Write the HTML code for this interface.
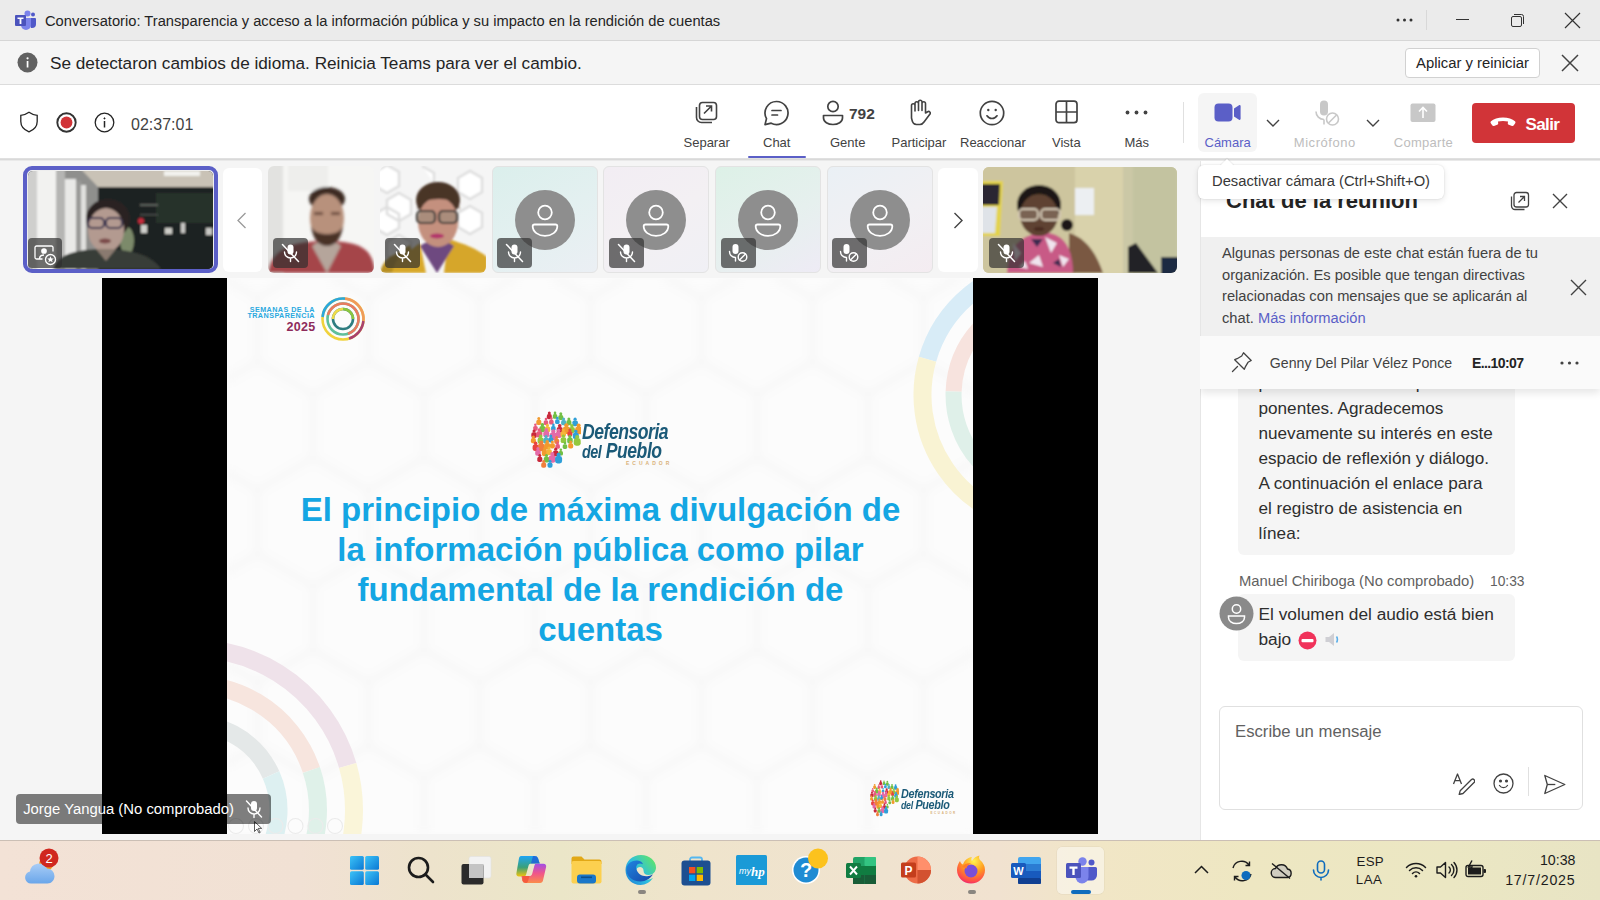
<!DOCTYPE html>
<html><head><meta charset="utf-8">
<style>
*{margin:0;padding:0;box-sizing:border-box}
html,body{width:1600px;height:900px;overflow:hidden;background:#f0f0f0;font-family:"Liberation Sans",sans-serif;color:#242424}
.a{position:absolute}
svg{display:block}
#title{left:0;top:0;width:1600px;height:41px;background:#ebebeb;border-bottom:1px solid #d6d6d6}
#notif{left:0;top:41px;width:1600px;height:44px;background:#f5f5f5;border-bottom:1px solid #dcdcdc}
#tool{left:0;top:85px;width:1600px;height:74px;background:#fff;border-bottom:1px solid #e0e0e0}
#stage{left:0;top:159px;width:1200px;height:681px;background:#f5f5f5}
#panel{left:1200px;top:159px;width:400px;height:681px;background:#fff;box-shadow:inset 1px 0 0 #e6e6e6;overflow:hidden}
#taskbar{left:0;top:840px;width:1600px;height:60px;background:linear-gradient(90deg,#f3e2d6 0px,#f1e1d4 300px,#ede3cc 430px,#ebe6c8 560px,#efe4cc 700px,#f0e3cf 880px,#f1e2d0 1000px,#f1e6c6 1100px,#eee7c2 1250px,#ebe7c3 1450px,#e8e4c4 1600px);box-shadow:inset 0 1px 0 #cbbfb5}
.t{position:absolute;line-height:1;white-space:nowrap}
.badge{width:35px;height:30px;background:rgba(45,45,45,0.68);border-radius:4px}
.vid{overflow:hidden;border-radius:6px}
.tileav{width:106px;height:107px;border-radius:6px;border:1px solid #e3e3e3;overflow:hidden}
.lbl{font-size:13px;color:#424242}
</style></head><body>
<div id="title" class="a">
 <svg class="a" style="left:14px;top:10px" width="22" height="20" viewBox="0 0 22 20">
  <circle cx="13.5" cy="3.5" r="3" fill="#7b83eb"/><circle cx="19" cy="4.5" r="2" fill="#5059c9"/>
  <path d="M14 8h7a1 1 0 0 1 1 1v5a4 4 0 0 1-4 4h-1z" fill="#5059c9"/>
  <path d="M8 8h9v7a5 5 0 0 1-10 0z" fill="#7b83eb"/>
  <rect x="1" y="5" width="11" height="11" rx="1" fill="#4b53bc"/>
  <path d="M3.5 7.5h6v1.6H7.4V14H5.6V9.1H3.5z" fill="#fff"/>
 </svg>
 <div class="t" style="left:45px;top:13.5px;font-size:14.7px;color:#242424">Conversatorio: Transparencia y acceso a la información pública y su impacto en la rendición de cuentas</div>
 <svg class="a" style="left:1396px;top:18px" width="20" height="4"><circle cx="2" cy="2" r="1.5" fill="#333"/><circle cx="8.5" cy="2" r="1.5" fill="#333"/><circle cx="15" cy="2" r="1.5" fill="#333"/></svg>
 <div class="a" style="left:1426px;top:10px;width:1px;height:20px;background:#d8d8d8"></div>
 <div class="a" style="left:1456px;top:19px;width:13px;height:1px;background:#333"></div>
 <svg class="a" style="left:1510px;top:13px" width="15" height="15" viewBox="0 0 15 15" fill="none" stroke="#333" stroke-width="1"><rect x="1.5" y="3.5" width="10" height="10" rx="1.5"/><path d="M4 1.5h7.5a2 2 0 0 1 2 2V11"/></svg>
 <svg class="a" style="left:1564px;top:12px" width="17" height="17" viewBox="0 0 17 17" stroke="#333" stroke-width="1.2"><path d="M1 1L16 16M16 1L1 16"/></svg>
</div>
<div id="notif" class="a">
 <svg class="a" style="left:17px;top:11px" width="21" height="21" viewBox="0 0 21 21"><circle cx="10.5" cy="10.5" r="10" fill="#616161"/><rect x="9.7" y="9" width="1.7" height="6.5" fill="#fff"/><circle cx="10.55" cy="6.3" r="1.1" fill="#fff"/></svg>
 <div class="t" style="left:50px;top:14px;font-size:17.2px;color:#242424">Se detectaron cambios de idioma. Reinicia Teams para ver el cambio.</div>
 <div class="a" style="left:1405px;top:7px;width:135px;height:30px;background:#fff;border:1px solid #d1d1d1;border-radius:4px"></div>
 <div class="t" style="left:1416px;top:14.5px;font-size:14.85px;color:#242424">Aplicar y reiniciar</div>
 <svg class="a" style="left:1561px;top:13px" width="18" height="18" viewBox="0 0 18 18" stroke="#424242" stroke-width="1.5"><path d="M1 1L17 17M17 1L1 17"/></svg>
</div>
<div id="tool" class="a">
 <svg class="a" style="left:19px;top:26px" width="20" height="22" viewBox="0 0 20 22" fill="none" stroke="#242424" stroke-width="1.3"><path d="M10 1.2C7.5 3 4.8 4 1.8 4.3v6.2c0 4.8 3 8.3 8.2 10.3c5.2-2 8.2-5.5 8.2-10.3V4.3C15.2 4 12.5 3 10 1.2z"/></svg>
 <svg class="a" style="left:56px;top:26.5px" width="21" height="21" viewBox="0 0 21 21"><circle cx="10.5" cy="10.5" r="9.2" fill="none" stroke="#333" stroke-width="1.9"/><circle cx="10.5" cy="10.5" r="5.9" fill="#d13438"/></svg>
 <svg class="a" style="left:93.5px;top:26.5px" width="21" height="21" viewBox="0 0 21 21" fill="none" stroke="#242424" stroke-width="1.3"><circle cx="10.5" cy="10.5" r="9.3"/><path d="M10.5 9v6.5" stroke-width="1.5"/><circle cx="10.5" cy="6.4" r="0.6" fill="#242424" stroke-width="0.9"/></svg>
 <div class="t" style="left:131px;top:31.5px;font-size:16px;color:#424242">02:37:01</div>

 <svg class="a" style="left:694px;top:15px" width="25" height="25" viewBox="0 0 25 25" fill="none" stroke="#424242" stroke-width="1.6"><rect x="5.5" y="2.5" width="17" height="17" rx="3"/><path d="M2.5 7v10.5a5 5 0 0 0 5 5H18"/><path d="M10 13.5l7.5-7.5M12 6h5.5v5.5"/></svg>
 <div class="t lbl" style="left:683.5px;top:50.5px">Separar</div>
 <svg class="a" style="left:763px;top:14.5px" width="27" height="26" viewBox="0 0 27 26" fill="none" stroke="#424242" stroke-width="1.7"><path d="M13.5 1.5a11.5 11.5 0 1 1-5.3 21.7L2 24.6l1.5-6A11.5 11.5 0 0 1 13.5 1.5z" stroke-linejoin="round"/><path d="M9 10.5h9M9 15h5.5" stroke-linecap="round"/></svg>
 <div class="t lbl" style="left:763px;top:50.5px">Chat</div>
 <div class="a" style="left:748px;top:70.5px;width:58px;height:2.5px;background:#5b5fc7;border-radius:1px"></div>
 <svg class="a" style="left:821px;top:14.5px" width="24" height="26" viewBox="0 0 24 26" fill="none" stroke="#424242" stroke-width="1.7"><circle cx="12" cy="6.5" r="5.2"/><path d="M2.5 15.5h19v2.5c0 4-4.5 6.5-9.5 6.5s-9.5-2.5-9.5-6.5z" stroke-linejoin="round"/></svg>
 <div class="t" style="left:849px;top:21px;font-size:15.5px;font-weight:700;color:#424242">792</div>
 <div class="t lbl" style="left:830px;top:50.5px">Gente</div>
 <svg class="a" style="left:909px;top:14px" width="22" height="27" viewBox="-1 -1 22 27" fill="none" stroke="#424242" stroke-width="1.6" stroke-linejoin="round" stroke-linecap="round"><path d="M1.5 18V5.5a1.75 1.75 0 0 1 3.5 0V11M5 11V3.5a1.75 1.75 0 0 1 3.5 0V10.5M8.5 10.5V2a1.75 1.75 0 0 1 3.5 0V10.5M12 10.5V3.5a1.75 1.75 0 0 1 3.5 0V13l2.2-1.3a1.7 1.7 0 0 1 2.3 2.4L14 22c-1 1.5-2 2.5-4 2.5H6.5c-2.5 0-4-2-4.5-4.5L1.5 18"/></svg>
 <div class="t lbl" style="left:891.5px;top:50.5px">Participar</div>
 <svg class="a" style="left:979px;top:14.5px" width="26" height="26" viewBox="0 0 26 26" fill="none" stroke="#424242" stroke-width="1.7"><circle cx="13" cy="13" r="11.7"/><path d="M8 15.8c1.2 1.8 3 2.7 5 2.7s3.8-.9 5-2.7" stroke-linecap="round"/><circle cx="9.3" cy="10" r="1.2" fill="#424242" stroke="none"/><circle cx="16.7" cy="10" r="1.2" fill="#424242" stroke="none"/></svg>
 <div class="t lbl" style="left:960px;top:50.5px">Reaccionar</div>
 <svg class="a" style="left:1055px;top:15px" width="23" height="24" viewBox="0 0 23 24" fill="none" stroke="#424242" stroke-width="1.7"><rect x="1" y="1.2" width="21" height="21.5" rx="3"/><path d="M11.5 1.2v21.5M1 12h21"/></svg>
 <div class="t lbl" style="left:1052px;top:50.5px">Vista</div>
 <svg class="a" style="left:1125px;top:24.5px" width="23" height="5" viewBox="0 0 23 5" fill="#424242"><circle cx="2.5" cy="2.5" r="1.9"/><circle cx="11.5" cy="2.5" r="1.9"/><circle cx="20.5" cy="2.5" r="1.9"/></svg>
 <div class="t lbl" style="left:1124.5px;top:50.5px">Más</div>
 <div class="a" style="left:1182.5px;top:17px;width:1px;height:41px;background:#e0e0e0"></div>

 <div class="a" style="left:1198px;top:7.5px;width:59px;height:59px;background:#f5f5f5;border-radius:6px"></div>
 <svg class="a" style="left:1214px;top:17.5px" width="27" height="19" viewBox="0 0 27 19"><rect x="0.5" y="0.5" width="18" height="18" rx="4" fill="#5b5fc7"/><path d="M20 5.5l5-3.2c.8-.5 1.6 0 1.6.9v12.6c0 .9-.8 1.4-1.6.9l-5-3.2z" fill="#5b5fc7"/></svg>
 <div class="t lbl" style="left:1204.5px;top:50.5px;color:#5b5fc7">Cámara</div>
 <svg class="a" style="left:1265.5px;top:33.5px" width="14" height="8" viewBox="0 0 14 8" fill="none" stroke="#424242" stroke-width="1.4"><path d="M1 1l6 6 6-6"/></svg>
 <svg class="a" style="left:1314px;top:14.5px" width="26" height="27" viewBox="0 0 26 27"><rect x="6" y="0.5" width="8" height="15" rx="4" fill="#c8c8c8"/><path d="M2 11.5c0 4.5 3.5 8 8 8" fill="none" stroke="#c8c8c8" stroke-width="1.6"/><path d="M10 19.5v5" stroke="#c8c8c8" stroke-width="1.6"/><circle cx="18.5" cy="19" r="6" fill="#fff" stroke="#c8c8c8" stroke-width="1.6"/><path d="M14.5 23l8-8" stroke="#c8c8c8" stroke-width="1.6"/></svg>
 <div class="t lbl" style="left:1293.8px;top:50.5px;color:#bdbdbd;letter-spacing:0.55px">Micrófono</div>
 <svg class="a" style="left:1365.5px;top:33.5px" width="14" height="8" viewBox="0 0 14 8" fill="none" stroke="#424242" stroke-width="1.4"><path d="M1 1l6 6 6-6"/></svg>
 <svg class="a" style="left:1410px;top:17.5px" width="26" height="19" viewBox="0 0 26 19"><rect x="0.5" y="0.5" width="25" height="18.5" rx="2" fill="#c8c8c8"/><path d="M13 15V5M9 8.5l4-4 4 4" fill="none" stroke="#fff" stroke-width="1.6"/></svg>
 <div class="t lbl" style="left:1393.8px;top:50.5px;color:#bdbdbd;letter-spacing:0.27px">Comparte</div>

 <div class="a" style="left:1472px;top:17.5px;width:103px;height:40px;background:#d13438;border-radius:4px"></div>
 <svg class="a" style="left:1490px;top:32px" width="26" height="11" viewBox="0 0 26 11"><path d="M13 0.5c5 0 9.5 1.5 12 3.8c.6.6.6 1.4.2 2l-1.4 2c-.4.6-1.1.8-1.8.6l-3.2-1.1c-.7-.2-1.1-.9-1-1.6l.2-1.6C16.6 4.2 14.8 4 13 4s-3.6.2-5 .6l.2 1.6c.1.7-.3 1.4-1 1.6L4 8.9c-.7.2-1.4 0-1.8-.6L.8 6.3c-.4-.6-.4-1.4.2-2C3.5 2 8 .5 13 .5z" fill="#fff"/></svg>
 <div class="t" style="left:1525.5px;top:30.5px;font-size:17px;font-weight:700;color:#fff;letter-spacing:-0.6px">Salir</div>
</div>
<div id="stage" class="a">
 <!-- filmstrip -->
 <div class="a" style="left:22.5px;top:7px;width:195px;height:107px;border:4px solid #5b5fc7;border-radius:9px;background:#eeeeee"></div>
 <div class="a vid" style="left:27.8px;top:11.8px;width:185px;height:98px;border-radius:5px">
  <svg width="185" height="98" viewBox="0 0 185 98">
   <defs><filter id="b1" x="-10%" y="-10%" width="120%" height="120%"><feGaussianBlur stdDeviation="1.3"/></filter></defs>
   <rect width="185" height="98" fill="#22272a"/>
   <g filter="url(#b1)">
   <rect x="-5" y="-5" width="75" height="110" fill="#8f8f8d"/>
   <rect x="-5" y="-5" width="14" height="110" fill="#cfcfcd"/>
   <rect x="9" y="-5" width="19" height="110" fill="#f2f2f0"/>
   <rect x="28" y="-5" width="9" height="110" fill="#b5b5b3"/>
   <rect x="37" y="8" width="11" height="100" fill="#e9e9e7"/>
   <rect x="48" y="10" width="5" height="100" fill="#9a9a98"/>
   <rect x="53" y="14" width="5" height="90" fill="#e0e0de"/>
   <path d="M50 -5h140v21H70z" fill="#c9c2b6"/>
   <rect x="136" y="0" width="36" height="5" fill="#f2f2ee"/>
   <rect x="70" y="16" width="120" height="90" fill="#1e2422"/>
   <rect x="128" y="22" width="60" height="30" fill="#26302c"/>
   <rect x="112" y="33" width="18" height="2" fill="#5a5e5a"/>
   <rect x="112" y="43" width="18" height="1.5" fill="#4a4e4a"/>
   <ellipse cx="99" cy="70" rx="7" ry="14" fill="#7c8a6a"/>
   <circle cx="113" cy="50" r="3" fill="#c42a3a"/>
   <rect x="113" y="54" width="6" height="8" fill="#cfd0cc"/><rect x="137" y="57" width="7" height="6" fill="#cdcdc8"/><rect x="153" y="52" width="4" height="10" fill="#c8c8c4"/><rect x="178" y="57" width="6" height="7" fill="#c8c8c4"/>
   <path d="M25 98c3-12 18-20 50-20s50 8 58 20z" fill="#383c38"/>
   <ellipse cx="80" cy="48" rx="22" ry="20" fill="#2a2220"/>
   <ellipse cx="78" cy="59" rx="18" ry="22" fill="#b39a90"/>
   <rect x="60" y="47" width="16" height="10" rx="4" fill="none" stroke="#3b3550" stroke-width="2"/><rect x="78" y="47" width="16" height="10" rx="4" fill="none" stroke="#3b3550" stroke-width="2"/>
   <ellipse cx="77" cy="70" rx="6" ry="2.5" fill="#7a4a48"/>
   <path d="M68 78l10 12 10-12z" fill="#8a7a70"/>
   </g>
  </svg>
 </div>
 <div class="a badge" style="left:28px;top:79px;width:34px;height:30px"><svg width="34" height="30" viewBox="0 0 34 30" fill="none" stroke="#fff" stroke-width="1.3"><path d="M14.5 21H8.5a1.5 1.5 0 0 1-1.5-1.5V9.5A1.5 1.5 0 0 1 8.5 8h15A1.5 1.5 0 0 1 25 9.5v4"/><circle cx="16" cy="13" r="2.2" fill="#fff"/><path d="M11.5 21c0-2.5 2-4 4.5-4" /><circle cx="22.5" cy="21.5" r="5" fill="#6b6b6b"/><path d="M22.5 18.3l1 2.1 2.2.2-1.7 1.4.6 2.2-2.1-1.2-2.1 1.2.6-2.2-1.7-1.4 2.2-.2z" fill="#fff" stroke="none"/></svg></div>
 <div class="a" style="left:223px;top:9px;width:39px;height:104px;background:#fff;border-radius:6px"></div>
 <svg class="a" style="left:236px;top:53px" width="11" height="17" viewBox="0 0 11 17" fill="none" stroke="#9a9a9a" stroke-width="1.3"><path d="M9.5 1L2 8.5 9.5 16"/></svg>

 <div class="a vid" style="left:267.5px;top:7px;width:106.5px;height:107px">
  <svg width="107" height="107" viewBox="0 0 107 107">
   <defs><filter id="b2" x="-10%" y="-10%" width="120%" height="120%"><feGaussianBlur stdDeviation="1.5"/></filter></defs>
   <rect width="107" height="107" fill="#f6f6f4"/>
   <g filter="url(#b2)">
   <rect x="-5" y="-5" width="20" height="115" fill="#e2e2e0"/>
   <rect x="20" y="-5" width="40" height="30" fill="#eeeeec"/>
   <path d="M0 107c2-22 20-32 58-32s47 10 49 32z" fill="#a5444a"/>
   <path d="M44 80l15 27 14-27c-5-4-9-6-14-6s-10 2-15 6z" fill="#b5a59b"/>
   <ellipse cx="59" cy="33" rx="18" ry="12" fill="#3c2b24"/>
   <ellipse cx="59" cy="52" rx="17" ry="24" fill="#b8917c"/>
   <path d="M43 60c2 14 8 20 16 20s14-6 16-20c-3 6-8 8-16 8s-13-2-16-8z" fill="#4a3128"/>
   <rect x="46" y="46" width="9" height="3" fill="#6a4a3a"/><rect x="63" y="46" width="9" height="3" fill="#6a4a3a"/>
   </g>
  </svg>
 </div>
 <div class="a badge" style="left:273px;top:79px"><svg width="35" height="30" viewBox="0 0 35 30" fill="none" stroke="#fff" stroke-width="1.4" stroke-linecap="round"><rect x="14.5" y="6.5" width="6" height="10" rx="3" fill="#fff" stroke="none"/><path d="M11.5 14c0 3.5 2.7 6 6 6s6-2.5 6-6M17.5 20v3.5"/><path d="M9.5 6.5l16 17" stroke-width="1.5"/></svg></div>
 <div class="a vid" style="left:379.5px;top:7px;width:106.5px;height:107px">
  <svg width="107" height="107" viewBox="0 0 107 107">
   <defs><filter id="b3" x="-10%" y="-10%" width="120%" height="120%"><feGaussianBlur stdDeviation="1.2"/></filter></defs>
   <rect width="107" height="107" fill="#f5f5f5"/>
   <g filter="url(#b3)" fill="#ffffff" stroke="#dedede" stroke-width="2.5">
   <path d="M-5 6l12-7 12 7v14l-12 7-12-7zM19 27l12 7v14l-12 7-12-7V34zM-5 48l12-7 12 7v14l-12 7-12-7zM19 69l12 7v14l-12 7-12-7V76zM78 12l12-7 12 7v14l-12 7-12-7zM90 40l12 7v14l-12 7-12-7V47zM42 0l12 7v10"/>
   </g>
   <g filter="url(#b3)">
   <path d="M0 107c2-10 8-16 14-18l16-10 6 28z" fill="#b89020"/>
   <path d="M68 73c14 4 30 10 39 18v16H64z" fill="#d6a62a"/>
   <path d="M12 107c3-14 10-20 20-24l8-6 6 30z" fill="#d8a82c"/>
   <path d="M40 80l17 27 17-27c-5-4-11-6-17-6s-12 2-17 6z" fill="#6e4a80"/>
   <ellipse cx="58" cy="34" rx="22" ry="18" fill="#4a3428"/>
   <ellipse cx="58" cy="56" rx="20" ry="25" fill="#c4907e"/>
   <path d="M37 44c2-12 10-20 21-20s20 8 22 20c-4-8-10-11-21-11s-17 3-22 11z" fill="#4a3428"/>
   <rect x="37" y="45" width="18" height="12" rx="4" fill="#7a8a78" fill-opacity="0.35" stroke="#403c3a" stroke-width="2.2"/><rect x="59" y="45" width="18" height="12" rx="4" fill="#7a8a78" fill-opacity="0.35" stroke="#403c3a" stroke-width="2.2"/>
   <ellipse cx="57" cy="70" rx="7" ry="2.5" fill="#b3366a"/>
   </g>
  </svg>
 </div>
 <div class="a badge" style="left:385px;top:79px"><svg width="35" height="30" viewBox="0 0 35 30" fill="none" stroke="#fff" stroke-width="1.4" stroke-linecap="round"><rect x="14.5" y="6.5" width="6" height="10" rx="3" fill="#fff" stroke="none"/><path d="M11.5 14c0 3.5 2.7 6 6 6s6-2.5 6-6M17.5 20v3.5"/><path d="M9.5 6.5l16 17" stroke-width="1.5"/></svg></div>
 <div class="a tileav" style="left:491.5px;top:7px;background:linear-gradient(150deg,#dbefec,#e3f0f0 50%,#ebeff4)"><svg class="a" style="left:22px;top:23px" width="60" height="60" viewBox="0 0 60 60"><circle cx="30" cy="30" r="30" fill="#8e8e8e"/><circle cx="30" cy="22.5" r="6.8" fill="none" stroke="#fff" stroke-width="1.8"/><path d="M19.5 34.5h21a1.8 1.8 0 0 1 1.8 1.8c0 5.5-5.5 9.5-12.3 9.5s-12.3-4-12.3-9.5a1.8 1.8 0 0 1 1.8-1.8z" fill="none" stroke="#fff" stroke-width="1.8" stroke-linejoin="round"/></svg></div>
 <div class="a badge" style="left:497px;top:79px"><svg width="35" height="30" viewBox="0 0 35 30" fill="none" stroke="#fff" stroke-width="1.4" stroke-linecap="round"><rect x="14.5" y="6.5" width="6" height="10" rx="3" fill="#fff" stroke="none"/><path d="M11.5 14c0 3.5 2.7 6 6 6s6-2.5 6-6M17.5 20v3.5"/><path d="M9.5 6.5l16 17" stroke-width="1.5"/></svg></div>
 <div class="a tileav" style="left:603px;top:7px;background:linear-gradient(150deg,#f2edf3,#f3f0f3 50%,#f0f0f5)"><svg class="a" style="left:22px;top:23px" width="60" height="60" viewBox="0 0 60 60"><circle cx="30" cy="30" r="30" fill="#8e8e8e"/><circle cx="30" cy="22.5" r="6.8" fill="none" stroke="#fff" stroke-width="1.8"/><path d="M19.5 34.5h21a1.8 1.8 0 0 1 1.8 1.8c0 5.5-5.5 9.5-12.3 9.5s-12.3-4-12.3-9.5a1.8 1.8 0 0 1 1.8-1.8z" fill="none" stroke="#fff" stroke-width="1.8" stroke-linejoin="round"/></svg></div>
 <div class="a badge" style="left:608.5px;top:79px"><svg width="35" height="30" viewBox="0 0 35 30" fill="none" stroke="#fff" stroke-width="1.4" stroke-linecap="round"><rect x="14.5" y="6.5" width="6" height="10" rx="3" fill="#fff" stroke="none"/><path d="M11.5 14c0 3.5 2.7 6 6 6s6-2.5 6-6M17.5 20v3.5"/><path d="M9.5 6.5l16 17" stroke-width="1.5"/></svg></div>
 <div class="a tileav" style="left:715px;top:7px;background:linear-gradient(150deg,#ddf1e7,#e6f0ee 55%,#eeebf5)"><svg class="a" style="left:22px;top:23px" width="60" height="60" viewBox="0 0 60 60"><circle cx="30" cy="30" r="30" fill="#8e8e8e"/><circle cx="30" cy="22.5" r="6.8" fill="none" stroke="#fff" stroke-width="1.8"/><path d="M19.5 34.5h21a1.8 1.8 0 0 1 1.8 1.8c0 5.5-5.5 9.5-12.3 9.5s-12.3-4-12.3-9.5a1.8 1.8 0 0 1 1.8-1.8z" fill="none" stroke="#fff" stroke-width="1.8" stroke-linejoin="round"/></svg></div>
 <div class="a badge" style="left:720.5px;top:79px"><svg width="35" height="30" viewBox="0 0 35 30" fill="none" stroke="#fff" stroke-width="1.4" stroke-linecap="round"><rect x="11.5" y="6" width="6" height="10" rx="3" fill="#fff" stroke="none"/><path d="M8.5 13.5c0 3.5 2.7 6 6 6M14.5 19.5v3.5"/><circle cx="21.5" cy="19" r="4.3"/><path d="M18.5 22l6-6"/></svg></div>
 <div class="a tileav" style="left:826.5px;top:7px;background:linear-gradient(150deg,#eaf0f5,#f1f0f3 55%,#f4ecf1)"><svg class="a" style="left:22px;top:23px" width="60" height="60" viewBox="0 0 60 60"><circle cx="30" cy="30" r="30" fill="#8e8e8e"/><circle cx="30" cy="22.5" r="6.8" fill="none" stroke="#fff" stroke-width="1.8"/><path d="M19.5 34.5h21a1.8 1.8 0 0 1 1.8 1.8c0 5.5-5.5 9.5-12.3 9.5s-12.3-4-12.3-9.5a1.8 1.8 0 0 1 1.8-1.8z" fill="none" stroke="#fff" stroke-width="1.8" stroke-linejoin="round"/></svg></div>
 <div class="a badge" style="left:832px;top:79px"><svg width="35" height="30" viewBox="0 0 35 30" fill="none" stroke="#fff" stroke-width="1.4" stroke-linecap="round"><rect x="11.5" y="6" width="6" height="10" rx="3" fill="#fff" stroke="none"/><path d="M8.5 13.5c0 3.5 2.7 6 6 6M14.5 19.5v3.5"/><circle cx="21.5" cy="19" r="4.3"/><path d="M18.5 22l6-6"/></svg></div>
 <div class="a" style="left:938px;top:9px;width:40px;height:104px;background:#fff;border-radius:6px"></div>
 <svg class="a" style="left:953px;top:53px" width="11" height="17" viewBox="0 0 11 17" fill="none" stroke="#424242" stroke-width="1.4"><path d="M1.5 1L9 8.5 1.5 16"/></svg>
 <div class="a vid" style="left:983.3px;top:7.5px;width:194px;height:106px">
  <svg width="194" height="106" viewBox="0 0 194 106">
   <defs><filter id="b4" x="-10%" y="-10%" width="120%" height="120%"><feGaussianBlur stdDeviation="1.3"/></filter></defs>
   <rect width="194" height="106" fill="#d5cea6"/>
   <g filter="url(#b4)">
   <rect x="-5" y="-5" width="97" height="115" fill="#cdc59e"/>
   <rect x="92" y="-5" width="48" height="115" fill="#d9d2ab"/>
   <rect x="140" y="-5" width="60" height="115" fill="#cbc8a6"/><rect x="150" y="-5" width="44" height="115" fill="#c3c3a0"/>
   <path d="M-5 14h25l-3 55H-5z" fill="#e3d34c"/>
   <path d="M-5 17h22l-1 21H-5z" fill="#2a2830"/>
   <path d="M-5 40h19l-2 26H-5z" fill="#dfe3e8"/>
   <rect x="92" y="21" width="19" height="27" fill="#eceff2"/>
   <path d="M145 80l8-4 22 30h-30z" fill="#232326"/>
   <rect x="178" y="90" width="20" height="18" fill="#1e2a42"/>
   <path d="M86 66c14 4 26 16 34 40H86z" fill="#7a5842"/>
   <path d="M24 106c1-22 10-38 34-40s32 18 32 40z" fill="#c85a86"/>
   <path d="M30 76l8 10-6 8zM62 70l12 6-6 10zM46 96l10-8 4 12zM76 88l10 4-6 8zM36 100l6-6 3 8z" fill="#f0e4ee"/>
   <path d="M48 72l6 8 6-8zM70 96l6-4 2 8z" fill="#3a2a50"/>
   <ellipse cx="56" cy="38" rx="22" ry="20" fill="#1c1816"/>
   <circle cx="84" cy="58" r="6" fill="#1c1816"/>
   <ellipse cx="56" cy="48" rx="19" ry="21" fill="#5e4232"/>
   <rect x="36" y="42" width="19" height="11" rx="4" fill="#b0a290" fill-opacity="0.35" stroke="#d2c6b2" stroke-width="2"/><rect x="58" y="42" width="19" height="11" rx="4" fill="#b0a290" fill-opacity="0.35" stroke="#d2c6b2" stroke-width="2"/>
   <ellipse cx="56" cy="62" rx="5" ry="2" fill="#4a2a22"/>
   </g>
  </svg>
 </div>
 <div class="a badge" style="left:988.5px;top:79px"><svg width="35" height="30" viewBox="0 0 35 30" fill="none" stroke="#fff" stroke-width="1.4" stroke-linecap="round"><rect x="14.5" y="6.5" width="6" height="10" rx="3" fill="#fff" stroke="none"/><path d="M11.5 14c0 3.5 2.7 6 6 6s6-2.5 6-6M17.5 20v3.5"/><path d="M9.5 6.5l16 17" stroke-width="1.5"/></svg></div>

 <!-- video frame -->
 <div class="a" style="left:102px;top:119px;width:124.5px;height:555.5px;background:#000"></div>
 <div class="a" style="left:973px;top:119px;width:125px;height:555.5px;background:#000"></div>
 <div class="a" id="slide" style="left:226.5px;top:119px;width:746.5px;height:555.5px;background:#fbfbfb;overflow:hidden">
  <svg class="a" style="left:0;top:0" width="747" height="556" viewBox="0 0 747 556">
   <defs><pattern id="hx" patternUnits="userSpaceOnUse" x="30.5" y="148" width="111" height="192"><path d="M0.0 -64.0 L55.4 -32.0 L55.4 32.0 L0.0 64.0 L-55.4 32.0 L-55.4 -32.0ZM111.0 -64.0 L166.4 -32.0 L166.4 32.0 L111.0 64.0 L55.6 32.0 L55.6 -32.0ZM55.5 32.0 L110.9 64.0 L110.9 128.0 L55.5 160.0 L0.1 128.0 L0.1 64.0ZM0.0 128.0 L55.4 160.0 L55.4 224.0 L0.0 256.0 L-55.4 224.0 L-55.4 160.0ZM111.0 128.0 L166.4 160.0 L166.4 224.0 L111.0 256.0 L55.6 224.0 L55.6 160.0Z" fill="#fcfcfc" stroke="#f7f7f7" stroke-width="7"/></pattern><filter id="hb"><feGaussianBlur stdDeviation="4"/></filter></defs>
   <rect width="747" height="556" fill="url(#hx)" filter="url(#hb)"/>
  </svg>
  <svg class="a" style="left:0;top:0" width="747" height="556" viewBox="0 0 747 556" fill="none">
   <g><path d="M-62.5 373.0A161.5 161.5 0 0 1 120.7 487.5" stroke="#efe2ea" stroke-width="18"/><path d="M120.7 487.5A161.5 161.5 0 0 1 105.4 612.8" stroke="#faf5d9" stroke-width="18"/><path d="M-56.3 408.4A125.5 125.5 0 0 1 84.4 492.0" stroke="#f7e5de" stroke-width="18"/><path d="M84.4 492.0A125.5 125.5 0 0 1 74.2 594.8" stroke="#dff1e9" stroke-width="18"/><path d="M-49.4 447.3A86 86 0 0 1 44.1 497.0" stroke="#e4e8e8" stroke-width="18"/><path d="M44.1 497.0A86 86 0 0 1 40.0 575.0" stroke="#ddf0f1" stroke-width="18"/><path d="M814.2 -12.5A130 130 0 0 0 700.5 81.2" stroke="#d8ecf7" stroke-width="18"/><path d="M700.5 81.2A130 130 0 0 0 814.2 246.5" stroke="#f9f3d3" stroke-width="18"/><path d="M816.9 18.4A99 99 0 0 0 726.6 113.5" stroke="#f7e3de" stroke-width="16"/><path d="M726.6 113.5A99 99 0 0 0 816.9 215.6" stroke="#dff0e9" stroke-width="16"/></g>
  </svg>
  <!-- semanas logo -->
  <div class="t" style="right:658.0px;top:28.5px;font-size:7.2px;font-weight:700;color:#2aa9df;text-align:right;line-height:6px;letter-spacing:0.45px">SEMANAS DE LA<br>TRANSPARENCIA</div>
  <div class="t" style="right:657.5px;top:43px;font-size:12.5px;font-weight:700;color:#8e2b5b;letter-spacing:0.3px">2025</div>
  <svg class="a" style="left:93.1px;top:17.799999999999997px" width="46" height="46" viewBox="-23 -23 46 46" fill="none" stroke-width="2.6">
   <circle r="20.5" stroke="#f0d23c"/>
   <path d="M-20.5 -2A20.5 20.5 0 0 1 2 -20.4" stroke="#2ba7dc"/>
   <path d="M2 -20.4A20.5 20.5 0 0 1 20.4 2" stroke="#ef9a5a"/>
   <path d="M20.4 2A20.5 20.5 0 0 1 6 19.6" stroke="#a8416e"/>
   <circle r="15.5" stroke="#5fbf9a"/>
   <path d="M-15 -4A15.5 15.5 0 0 1 15 4" stroke="#ea7b5e"/>
   <path d="M15 4A15.5 15.5 0 0 1 5 14.7" stroke="#ea7b5e"/>
   <circle r="10" stroke="#2f7d80"/>
   <path d="M-10 0A10 10 0 0 1 0 -10" stroke="#eedb4a"/>
   <path d="M0 -10A10 10 0 0 1 10 0" stroke="#8cc63f"/>
  </svg>
  <!-- defensoria logo -->
  <svg class="a" style="left:302px;top:133px" width="52" height="58" viewBox="0 0 52 58"><circle cx="20.3" cy="1.9" r="1.5" fill="#c8283a"/><rect x="17.8" y="3.1" width="5" height="5.2" rx="1.8" fill="#c8283a"/><circle cx="26.0" cy="1.9" r="1.3" fill="#72bf44"/><rect x="23.8" y="3.1" width="4.5" height="4.7" rx="1.6" fill="#72bf44"/><circle cx="31.8" cy="2.7" r="1.5" fill="#72bf44"/><rect x="29.3" y="3.9" width="5" height="5.2" rx="1.8" fill="#72bf44"/><circle cx="9.8" cy="7.6" r="1.5" fill="#f29a2e"/><rect x="7.3" y="8.8" width="5" height="5.2" rx="1.8" fill="#f29a2e"/><circle cx="17.0" cy="8.1" r="1.3" fill="#e75a7c"/><rect x="14.7" y="9.3" width="4.5" height="4.7" rx="1.6" fill="#e75a7c"/><circle cx="22.4" cy="7.6" r="1.3" fill="#e75a7c"/><rect x="20.1" y="8.8" width="4.5" height="4.7" rx="1.6" fill="#e75a7c"/><circle cx="28.3" cy="7.1" r="1.3" fill="#2f9fd8"/><rect x="26.1" y="8.3" width="4.5" height="4.7" rx="1.6" fill="#2f9fd8"/><circle cx="34.6" cy="7.9" r="1.5" fill="#4fb3c5"/><rect x="32.1" y="9.1" width="5" height="5.2" rx="1.8" fill="#4fb3c5"/><circle cx="39.9" cy="7.9" r="1.5" fill="#72bf44"/><rect x="37.4" y="9.1" width="5" height="5.2" rx="1.8" fill="#72bf44"/><circle cx="46.1" cy="8.2" r="1.6" fill="#2f9fd8"/><rect x="43.4" y="9.4" width="5.5" height="5.8" rx="1.9" fill="#2f9fd8"/><circle cx="6.4" cy="13.8" r="1.3" fill="#e75a7c"/><rect x="4.2" y="15.0" width="4.5" height="4.7" rx="1.6" fill="#e75a7c"/><circle cx="13.4" cy="13.7" r="1.8" fill="#72bf44"/><rect x="10.4" y="14.9" width="6" height="6.3" rx="2.1" fill="#72bf44"/><circle cx="18.4" cy="14.4" r="1.6" fill="#f5b63a"/><rect x="15.7" y="15.6" width="5.5" height="5.8" rx="1.9" fill="#f5b63a"/><circle cx="24.4" cy="13.9" r="1.3" fill="#2f9fd8"/><rect x="22.1" y="15.1" width="4.5" height="4.7" rx="1.6" fill="#2f9fd8"/><circle cx="30.7" cy="14.8" r="1.8" fill="#c8283a"/><rect x="27.7" y="16.0" width="6" height="6.3" rx="2.1" fill="#c8283a"/><circle cx="37.4" cy="14.3" r="2.1" fill="#f29a2e"/><rect x="33.9" y="15.5" width="7" height="7.4" rx="2.4" fill="#f29a2e"/><circle cx="42.9" cy="14.7" r="1.8" fill="#93c83e"/><rect x="39.9" y="15.9" width="6" height="6.3" rx="2.1" fill="#93c83e"/><circle cx="49.6" cy="14.6" r="2.1" fill="#f29a2e"/><rect x="46.1" y="15.8" width="7" height="7.4" rx="2.4" fill="#f29a2e"/><circle cx="5.1" cy="20.0" r="1.6" fill="#c8283a"/><rect x="2.3" y="21.2" width="5.5" height="5.8" rx="1.9" fill="#c8283a"/><circle cx="10.3" cy="19.0" r="1.8" fill="#e75a7c"/><rect x="7.3" y="20.2" width="6" height="6.3" rx="2.1" fill="#e75a7c"/><circle cx="17.3" cy="18.9" r="1.8" fill="#e36aa8"/><rect x="14.3" y="20.1" width="6" height="6.3" rx="2.1" fill="#e36aa8"/><circle cx="24.3" cy="20.4" r="2.1" fill="#e36aa8"/><rect x="20.8" y="21.6" width="7" height="7.4" rx="2.4" fill="#e36aa8"/><circle cx="29.6" cy="19.5" r="1.8" fill="#e36aa8"/><rect x="26.6" y="20.7" width="6" height="6.3" rx="2.1" fill="#e36aa8"/><circle cx="34.2" cy="19.0" r="1.6" fill="#f5b63a"/><rect x="31.5" y="20.2" width="5.5" height="5.8" rx="1.9" fill="#f5b63a"/><circle cx="40.9" cy="19.1" r="1.5" fill="#e8433f"/><rect x="38.4" y="20.3" width="5" height="5.2" rx="1.8" fill="#e8433f"/><circle cx="46.8" cy="20.5" r="1.8" fill="#2f9fd8"/><rect x="43.8" y="21.7" width="6" height="6.3" rx="2.1" fill="#2f9fd8"/><circle cx="4.4" cy="25.9" r="1.5" fill="#f29a2e"/><rect x="1.9" y="27.1" width="5" height="5.2" rx="1.8" fill="#f29a2e"/><circle cx="11.6" cy="25.4" r="1.8" fill="#93c83e"/><rect x="8.6" y="26.6" width="6" height="6.3" rx="2.1" fill="#93c83e"/><circle cx="17.0" cy="25.6" r="1.6" fill="#4fb3c5"/><rect x="14.3" y="26.8" width="5.5" height="5.8" rx="1.9" fill="#4fb3c5"/><circle cx="21.8" cy="25.1" r="1.5" fill="#2f9fd8"/><rect x="19.3" y="26.3" width="5" height="5.2" rx="1.8" fill="#2f9fd8"/><circle cx="27.7" cy="26.5" r="1.5" fill="#f07f3c"/><rect x="25.2" y="27.7" width="5" height="5.2" rx="1.8" fill="#f07f3c"/><circle cx="34.4" cy="25.1" r="1.6" fill="#93c83e"/><rect x="31.7" y="26.3" width="5.5" height="5.8" rx="1.9" fill="#93c83e"/><circle cx="40.9" cy="25.4" r="1.6" fill="#72bf44"/><rect x="38.2" y="26.6" width="5.5" height="5.8" rx="1.9" fill="#72bf44"/><circle cx="48.2" cy="26.1" r="2.1" fill="#93c83e"/><rect x="44.7" y="27.3" width="7" height="7.4" rx="2.4" fill="#93c83e"/><circle cx="6.6" cy="32.4" r="1.8" fill="#e8433f"/><rect x="3.6" y="33.6" width="6" height="6.3" rx="2.1" fill="#e8433f"/><circle cx="12.3" cy="31.6" r="2.1" fill="#f07f3c"/><rect x="8.8" y="32.8" width="7" height="7.4" rx="2.4" fill="#f07f3c"/><circle cx="18.2" cy="30.9" r="1.8" fill="#f29a2e"/><rect x="15.2" y="32.1" width="6" height="6.3" rx="2.1" fill="#f29a2e"/><circle cx="23.4" cy="31.0" r="1.5" fill="#f29a2e"/><rect x="20.9" y="32.2" width="5" height="5.2" rx="1.8" fill="#f29a2e"/><circle cx="28.6" cy="31.9" r="1.3" fill="#e75a7c"/><rect x="26.4" y="33.1" width="4.5" height="4.7" rx="1.6" fill="#e75a7c"/><circle cx="36.0" cy="32.0" r="1.3" fill="#72bf44"/><rect x="33.7" y="33.2" width="4.5" height="4.7" rx="1.6" fill="#72bf44"/><circle cx="41.7" cy="31.1" r="1.5" fill="#f29a2e"/><rect x="39.2" y="32.3" width="5" height="5.2" rx="1.8" fill="#f29a2e"/><circle cx="8.9" cy="37.7" r="1.6" fill="#e36aa8"/><rect x="6.2" y="38.9" width="5.5" height="5.8" rx="1.9" fill="#e36aa8"/><circle cx="15.8" cy="37.7" r="1.8" fill="#f29a2e"/><rect x="12.8" y="38.9" width="6" height="6.3" rx="2.1" fill="#f29a2e"/><circle cx="20.1" cy="37.0" r="1.6" fill="#f5b63a"/><rect x="17.3" y="38.2" width="5.5" height="5.8" rx="1.9" fill="#f5b63a"/><circle cx="26.7" cy="38.2" r="1.6" fill="#c8283a"/><rect x="24.0" y="39.4" width="5.5" height="5.8" rx="1.9" fill="#c8283a"/><circle cx="31.8" cy="38.7" r="1.3" fill="#72bf44"/><rect x="29.5" y="39.9" width="4.5" height="4.7" rx="1.6" fill="#72bf44"/><circle cx="10.8" cy="44.6" r="1.5" fill="#c8283a"/><rect x="8.3" y="45.8" width="5" height="5.2" rx="1.8" fill="#c8283a"/><circle cx="17.5" cy="44.5" r="1.6" fill="#72bf44"/><rect x="14.8" y="45.7" width="5.5" height="5.8" rx="1.9" fill="#72bf44"/><circle cx="23.3" cy="43.1" r="2.1" fill="#e36aa8"/><rect x="19.8" y="44.3" width="7" height="7.4" rx="2.4" fill="#e36aa8"/><circle cx="29.6" cy="43.8" r="2.1" fill="#2f9fd8"/><rect x="26.1" y="45.0" width="7" height="7.4" rx="2.4" fill="#2f9fd8"/><circle cx="14.7" cy="50.4" r="1.5" fill="#f07f3c"/><rect x="12.2" y="51.6" width="5" height="5.2" rx="1.8" fill="#f07f3c"/><circle cx="21.0" cy="50.3" r="1.5" fill="#2f9fd8"/><rect x="18.5" y="51.5" width="5" height="5.2" rx="1.8" fill="#2f9fd8"/></svg>
  <div class="t" style="left:355px;top:142.5px;font-style:italic;font-weight:700;font-size:22px;color:#1b5a78;letter-spacing:-0.6px;transform:scaleX(0.8);transform-origin:0 0">Defensoria</div>
  <div class="t" style="left:355px;top:161.5px;font-style:italic;font-weight:700;font-size:22px;color:#1b5a78;letter-spacing:-0.6px;transform:scaleX(0.8);transform-origin:0 0"><span style="font-size:18px">del</span> Pueblo</div>
  <div class="t" style="left:399.5px;top:182.5px;font-size:5px;font-weight:700;color:#d9b27a;letter-spacing:3px">ECUADOR</div>
  <!-- title -->
  <div class="a" style="left:0;top:212.4px;width:746.5px;text-align:center;font-size:33px;line-height:40px;font-weight:700;color:#14a6e3;letter-spacing:0;padding-left:1.5px">El principio de máxima divulgación de<br>la información pública como pilar<br>fundamental de la rendición de<br>cuentas</div>
  <!-- small logo -->
  <svg class="a" style="left:642px;top:501.5px" width="30" height="37" viewBox="0 0 52 58" preserveAspectRatio="none"><circle cx="20.3" cy="1.9" r="1.5" fill="#c8283a"/><rect x="17.8" y="3.1" width="5" height="5.2" rx="1.8" fill="#c8283a"/><circle cx="26.0" cy="1.9" r="1.3" fill="#72bf44"/><rect x="23.8" y="3.1" width="4.5" height="4.7" rx="1.6" fill="#72bf44"/><circle cx="31.8" cy="2.7" r="1.5" fill="#72bf44"/><rect x="29.3" y="3.9" width="5" height="5.2" rx="1.8" fill="#72bf44"/><circle cx="9.8" cy="7.6" r="1.5" fill="#f29a2e"/><rect x="7.3" y="8.8" width="5" height="5.2" rx="1.8" fill="#f29a2e"/><circle cx="17.0" cy="8.1" r="1.3" fill="#e75a7c"/><rect x="14.7" y="9.3" width="4.5" height="4.7" rx="1.6" fill="#e75a7c"/><circle cx="22.4" cy="7.6" r="1.3" fill="#e75a7c"/><rect x="20.1" y="8.8" width="4.5" height="4.7" rx="1.6" fill="#e75a7c"/><circle cx="28.3" cy="7.1" r="1.3" fill="#2f9fd8"/><rect x="26.1" y="8.3" width="4.5" height="4.7" rx="1.6" fill="#2f9fd8"/><circle cx="34.6" cy="7.9" r="1.5" fill="#4fb3c5"/><rect x="32.1" y="9.1" width="5" height="5.2" rx="1.8" fill="#4fb3c5"/><circle cx="39.9" cy="7.9" r="1.5" fill="#72bf44"/><rect x="37.4" y="9.1" width="5" height="5.2" rx="1.8" fill="#72bf44"/><circle cx="46.1" cy="8.2" r="1.6" fill="#2f9fd8"/><rect x="43.4" y="9.4" width="5.5" height="5.8" rx="1.9" fill="#2f9fd8"/><circle cx="6.4" cy="13.8" r="1.3" fill="#e75a7c"/><rect x="4.2" y="15.0" width="4.5" height="4.7" rx="1.6" fill="#e75a7c"/><circle cx="13.4" cy="13.7" r="1.8" fill="#72bf44"/><rect x="10.4" y="14.9" width="6" height="6.3" rx="2.1" fill="#72bf44"/><circle cx="18.4" cy="14.4" r="1.6" fill="#f5b63a"/><rect x="15.7" y="15.6" width="5.5" height="5.8" rx="1.9" fill="#f5b63a"/><circle cx="24.4" cy="13.9" r="1.3" fill="#2f9fd8"/><rect x="22.1" y="15.1" width="4.5" height="4.7" rx="1.6" fill="#2f9fd8"/><circle cx="30.7" cy="14.8" r="1.8" fill="#c8283a"/><rect x="27.7" y="16.0" width="6" height="6.3" rx="2.1" fill="#c8283a"/><circle cx="37.4" cy="14.3" r="2.1" fill="#f29a2e"/><rect x="33.9" y="15.5" width="7" height="7.4" rx="2.4" fill="#f29a2e"/><circle cx="42.9" cy="14.7" r="1.8" fill="#93c83e"/><rect x="39.9" y="15.9" width="6" height="6.3" rx="2.1" fill="#93c83e"/><circle cx="49.6" cy="14.6" r="2.1" fill="#f29a2e"/><rect x="46.1" y="15.8" width="7" height="7.4" rx="2.4" fill="#f29a2e"/><circle cx="5.1" cy="20.0" r="1.6" fill="#c8283a"/><rect x="2.3" y="21.2" width="5.5" height="5.8" rx="1.9" fill="#c8283a"/><circle cx="10.3" cy="19.0" r="1.8" fill="#e75a7c"/><rect x="7.3" y="20.2" width="6" height="6.3" rx="2.1" fill="#e75a7c"/><circle cx="17.3" cy="18.9" r="1.8" fill="#e36aa8"/><rect x="14.3" y="20.1" width="6" height="6.3" rx="2.1" fill="#e36aa8"/><circle cx="24.3" cy="20.4" r="2.1" fill="#e36aa8"/><rect x="20.8" y="21.6" width="7" height="7.4" rx="2.4" fill="#e36aa8"/><circle cx="29.6" cy="19.5" r="1.8" fill="#e36aa8"/><rect x="26.6" y="20.7" width="6" height="6.3" rx="2.1" fill="#e36aa8"/><circle cx="34.2" cy="19.0" r="1.6" fill="#f5b63a"/><rect x="31.5" y="20.2" width="5.5" height="5.8" rx="1.9" fill="#f5b63a"/><circle cx="40.9" cy="19.1" r="1.5" fill="#e8433f"/><rect x="38.4" y="20.3" width="5" height="5.2" rx="1.8" fill="#e8433f"/><circle cx="46.8" cy="20.5" r="1.8" fill="#2f9fd8"/><rect x="43.8" y="21.7" width="6" height="6.3" rx="2.1" fill="#2f9fd8"/><circle cx="4.4" cy="25.9" r="1.5" fill="#f29a2e"/><rect x="1.9" y="27.1" width="5" height="5.2" rx="1.8" fill="#f29a2e"/><circle cx="11.6" cy="25.4" r="1.8" fill="#93c83e"/><rect x="8.6" y="26.6" width="6" height="6.3" rx="2.1" fill="#93c83e"/><circle cx="17.0" cy="25.6" r="1.6" fill="#4fb3c5"/><rect x="14.3" y="26.8" width="5.5" height="5.8" rx="1.9" fill="#4fb3c5"/><circle cx="21.8" cy="25.1" r="1.5" fill="#2f9fd8"/><rect x="19.3" y="26.3" width="5" height="5.2" rx="1.8" fill="#2f9fd8"/><circle cx="27.7" cy="26.5" r="1.5" fill="#f07f3c"/><rect x="25.2" y="27.7" width="5" height="5.2" rx="1.8" fill="#f07f3c"/><circle cx="34.4" cy="25.1" r="1.6" fill="#93c83e"/><rect x="31.7" y="26.3" width="5.5" height="5.8" rx="1.9" fill="#93c83e"/><circle cx="40.9" cy="25.4" r="1.6" fill="#72bf44"/><rect x="38.2" y="26.6" width="5.5" height="5.8" rx="1.9" fill="#72bf44"/><circle cx="48.2" cy="26.1" r="2.1" fill="#93c83e"/><rect x="44.7" y="27.3" width="7" height="7.4" rx="2.4" fill="#93c83e"/><circle cx="6.6" cy="32.4" r="1.8" fill="#e8433f"/><rect x="3.6" y="33.6" width="6" height="6.3" rx="2.1" fill="#e8433f"/><circle cx="12.3" cy="31.6" r="2.1" fill="#f07f3c"/><rect x="8.8" y="32.8" width="7" height="7.4" rx="2.4" fill="#f07f3c"/><circle cx="18.2" cy="30.9" r="1.8" fill="#f29a2e"/><rect x="15.2" y="32.1" width="6" height="6.3" rx="2.1" fill="#f29a2e"/><circle cx="23.4" cy="31.0" r="1.5" fill="#f29a2e"/><rect x="20.9" y="32.2" width="5" height="5.2" rx="1.8" fill="#f29a2e"/><circle cx="28.6" cy="31.9" r="1.3" fill="#e75a7c"/><rect x="26.4" y="33.1" width="4.5" height="4.7" rx="1.6" fill="#e75a7c"/><circle cx="36.0" cy="32.0" r="1.3" fill="#72bf44"/><rect x="33.7" y="33.2" width="4.5" height="4.7" rx="1.6" fill="#72bf44"/><circle cx="41.7" cy="31.1" r="1.5" fill="#f29a2e"/><rect x="39.2" y="32.3" width="5" height="5.2" rx="1.8" fill="#f29a2e"/><circle cx="8.9" cy="37.7" r="1.6" fill="#e36aa8"/><rect x="6.2" y="38.9" width="5.5" height="5.8" rx="1.9" fill="#e36aa8"/><circle cx="15.8" cy="37.7" r="1.8" fill="#f29a2e"/><rect x="12.8" y="38.9" width="6" height="6.3" rx="2.1" fill="#f29a2e"/><circle cx="20.1" cy="37.0" r="1.6" fill="#f5b63a"/><rect x="17.3" y="38.2" width="5.5" height="5.8" rx="1.9" fill="#f5b63a"/><circle cx="26.7" cy="38.2" r="1.6" fill="#c8283a"/><rect x="24.0" y="39.4" width="5.5" height="5.8" rx="1.9" fill="#c8283a"/><circle cx="31.8" cy="38.7" r="1.3" fill="#72bf44"/><rect x="29.5" y="39.9" width="4.5" height="4.7" rx="1.6" fill="#72bf44"/><circle cx="10.8" cy="44.6" r="1.5" fill="#c8283a"/><rect x="8.3" y="45.8" width="5" height="5.2" rx="1.8" fill="#c8283a"/><circle cx="17.5" cy="44.5" r="1.6" fill="#72bf44"/><rect x="14.8" y="45.7" width="5.5" height="5.8" rx="1.9" fill="#72bf44"/><circle cx="23.3" cy="43.1" r="2.1" fill="#e36aa8"/><rect x="19.8" y="44.3" width="7" height="7.4" rx="2.4" fill="#e36aa8"/><circle cx="29.6" cy="43.8" r="2.1" fill="#2f9fd8"/><rect x="26.1" y="45.0" width="7" height="7.4" rx="2.4" fill="#2f9fd8"/><circle cx="14.7" cy="50.4" r="1.5" fill="#f07f3c"/><rect x="12.2" y="51.6" width="5" height="5.2" rx="1.8" fill="#f07f3c"/><circle cx="21.0" cy="50.3" r="1.5" fill="#2f9fd8"/><rect x="18.5" y="51.5" width="5" height="5.2" rx="1.8" fill="#2f9fd8"/></svg>
  <div class="t" style="left:674px;top:508.5px;font-style:italic;font-weight:700;font-size:13.5px;color:#1b5a78;letter-spacing:-0.4px;transform:scaleX(0.8);transform-origin:0 0">Defensoria</div>
  <div class="t" style="left:674px;top:520px;font-style:italic;font-weight:700;font-size:13.5px;color:#1b5a78;letter-spacing:-0.4px;transform:scaleX(0.8);transform-origin:0 0"><span style="font-size:11px">del</span> Pueblo</div><div class="t" style="left:704px;top:534px;font-size:3px;font-weight:700;color:#d9b27a;letter-spacing:1.6px">ECUADOR</div>
 </div>

 <svg class="a" style="left:226px;top:658px" width="120" height="18" viewBox="226 817 120 18" fill="none" stroke="#ebebeb" stroke-width="1.1"><circle cx="236" cy="826" r="7.5"/><circle cx="256" cy="826" r="7.5"/><circle cx="275.5" cy="826" r="7.5"/><circle cx="295.5" cy="826" r="7.5"/><circle cx="315.5" cy="826" r="7.5"/><circle cx="335" cy="826" r="7.5"/><path d="M254.5 821.5v10l2.5-2.5 2 4 1.2-.6-2-4h3.5z" fill="#fff" stroke="#333" stroke-width="0.8"/></svg>
 <div class="a" style="left:15.5px;top:635px;width:255.5px;height:30px;background:rgba(0,0,0,0.5);border-radius:4px"></div>
 <div class="t" style="left:23.2px;top:643px;font-size:14.85px;color:#fff">Jorge Yangua (No comprobado)</div>
 <svg class="a" style="left:244px;top:640px" width="20" height="20" viewBox="0 0 20 20" fill="none" stroke="#fff" stroke-width="1.4" stroke-linecap="round"><rect x="7" y="2" width="6" height="10" rx="3" fill="#fff" stroke="none"/><path d="M4 9c0 3.5 2.7 6 6 6s6-2.5 6-6M10 15v3.5"/><path d="M2.5 2l15 16"/></svg>
</div>
<div id="panel" class="a">
 <div class="a" style="left:38px;top:150px;width:277px;height:245.60000000000002px;background:#f5f5f5;border-radius:6px"></div>
 <div class="t" style="left:58.5px;top:215.5px;font-size:17.15px;color:#2e2e2e">pero no tenemos respuesta de los</div><div class="t" style="left:58.5px;top:240.5px;font-size:17.15px;color:#2e2e2e">ponentes. Agradecemos</div><div class="t" style="left:58.5px;top:265.5px;font-size:17.15px;color:#2e2e2e">nuevamente su interés en este</div><div class="t" style="left:58.5px;top:290.5px;font-size:17.15px;color:#2e2e2e">espacio de reflexión y diálogo.</div><div class="t" style="left:58.5px;top:315.5px;font-size:17.15px;color:#2e2e2e">A continuación el enlace para</div><div class="t" style="left:58.5px;top:340.5px;font-size:17.15px;color:#2e2e2e">el registro de asistencia en</div><div class="t" style="left:58.5px;top:365.5px;font-size:17.15px;color:#2e2e2e">línea:</div>
 <div class="t" style="left:39.0px;top:415.2px;font-size:14.8px;color:#616161">Manuel Chiriboga (No comprobado)</div>
 <div class="t" style="left:290.0px;top:416.0px;font-size:13.8px;color:#616161">10:33</div>
 <div class="a" style="left:38px;top:434.6px;width:277px;height:67.5px;background:#f5f5f5;border-radius:6px"></div>
 <svg class="a" style="left:18.5px;top:436.5px" width="35" height="35" viewBox="0 0 35 35"><circle cx="17.5" cy="17.5" r="17" fill="#8a8a8a"/><circle cx="17.5" cy="13" r="4.2" fill="none" stroke="#fff" stroke-width="1.5"/><path d="M9.5 20h16v1.5c0 3.5-3.5 6-8 6s-8-2.5-8-6z" fill="none" stroke="#fff" stroke-width="1.5"/></svg>
 <div class="t" style="left:58.5px;top:447.4px;font-size:17.3px;color:#2e2e2e">El volumen del audio está bien</div>
 <div class="t" style="left:58.5px;top:472.4px;font-size:17.3px;color:#2e2e2e">bajo</div>
 <svg class="a" style="left:98px;top:471.5px" width="19" height="19" viewBox="0 0 19 19"><circle cx="9.5" cy="9.5" r="9" fill="#f0325a"/><rect x="3.5" y="8" width="12" height="3.2" rx="1" fill="#fff"/></svg>
 <svg class="a" style="left:124px;top:472px" width="17" height="17" viewBox="0 0 17 17"><path d="M1.5 6h3.5l5-4v13l-5-4H1.5z" fill="#cfcfd4"/><path d="M12.5 5.5c1.2 1.5 1.2 4.5 0 6" fill="none" stroke="#5aaee8" stroke-width="1.6"/></svg>

 <!-- pinned bar -->
 <div class="a" style="left:0;top:176.5px;width:400px;height:53px;background:#fafafa;box-shadow:0 4px 8px rgba(0,0,0,0.10)"></div>
 <svg class="a" style="left:30.5px;top:192px" width="22" height="22" viewBox="0 0 22 22" fill="none" stroke="#424242" stroke-width="1.3" stroke-linejoin="round"><path d="M12.5 1.8l7.7 7.7-3.2 1.8-2.7 4.6-1 2.4-9.6-9.6 2.4-1 4.6-2.7z"/><path d="M6.5 15.5l-5 5" stroke-linecap="round"/></svg>
 <div class="t" style="left:69.8px;top:196.8px;font-size:14.15px;color:#424242">Genny Del Pilar Vélez Ponce</div>
 <div class="t" style="left:272.0px;top:196.9px;font-size:14px;color:#242424;font-weight:700;letter-spacing:-0.6px">E...10:07</div>
 <svg class="a" style="left:359.5px;top:201.5px" width="19" height="4" viewBox="0 0 19 4" fill="#424242"><circle cx="2" cy="2" r="1.6"/><circle cx="9.5" cy="2" r="1.6"/><circle cx="17" cy="2" r="1.6"/></svg>

 <!-- banner -->
 <div class="a" style="left:1px;top:77.69999999999999px;width:399px;height:99px;background:#f0f0f0"></div>
 <div class="a" style="left:22px;top:84.1px;font-size:14.7px;line-height:21.5px;color:#424242;white-space:nowrap">Algunas personas de este chat están fuera de tu<br>organización. Es posible que tengan directivas<br>relacionadas con mensajes que se aplicarán al<br>chat. <span style="color:#5b5fc7">Más información</span></div>
 <svg class="a" style="left:370px;top:119.5px" width="17" height="17" viewBox="0 0 17 17" stroke="#424242" stroke-width="1.4"><path d="M1 1l15 15M16 1L1 16"/></svg>

 <!-- header -->
 <div class="t" style="left:26px;top:30.7px;font-size:22px;font-weight:700;color:#242424">Chat de la reunión</div>
 <svg class="a" style="left:310px;top:31.5px" width="20" height="20" viewBox="0 0 20 20" fill="none" stroke="#424242" stroke-width="1.3"><rect x="4" y="1.5" width="14.5" height="14.5" rx="2.5"/><path d="M1.5 5.5v9.5a3.5 3.5 0 0 0 3.5 3.5h9.5"/><path d="M8.5 11.5l6-6M10 5.5h4.5V10"/></svg>
 <svg class="a" style="left:352px;top:33.5px" width="16" height="16" viewBox="0 0 16 16" stroke="#424242" stroke-width="1.4"><path d="M1 1l14 14M15 1L1 15"/></svg>

 <!-- compose -->
 <div class="a" style="left:18.5px;top:546.5px;width:364px;height:104.5px;background:#fff;border:1px solid #e0e0e0;border-radius:6px"></div>
 <div class="t" style="left:35.0px;top:564.9px;font-size:16.7px;color:#616161">Escribe un mensaje</div>
 <svg class="a" style="left:251.5px;top:613.5px" width="23" height="22" viewBox="0 0 23 22" fill="none" stroke="#424242" stroke-width="1.3" stroke-linejoin="round"><path d="M1.5 11L5.5 1l4 10M2.8 7.7h5.4"/><path d="M19.5 6.5a2 2 0 0 1 2.8 2.8L11 20.5l-3.8 1 1-3.8z"/></svg>
 <svg class="a" style="left:292.5px;top:614px" width="21" height="21" viewBox="0 0 21 21" fill="none" stroke="#424242" stroke-width="1.3"><circle cx="10.5" cy="10.5" r="9.5"/><path d="M6.5 12.5c1 1.5 2.4 2.2 4 2.2s3-.7 4-2.2" stroke-linecap="round"/><circle cx="7.5" cy="8" r="0.9" fill="#424242"/><circle cx="13.5" cy="8" r="0.9" fill="#424242"/></svg>
 <div class="a" style="left:328px;top:608px;width:1px;height:29px;background:#e0e0e0"></div>
 <svg class="a" style="left:342.5px;top:614.5px" width="23" height="21" viewBox="0 0 23 21" fill="none" stroke="#424242" stroke-width="1.3" stroke-linejoin="round"><path d="M1.8 1.5l20 9-20 9 2.5-9z"/><path d="M4.3 10.5h8"/></svg>


</div>
<div id="taskbar" class="a">
 <svg class="a" style="left:22px;top:8px" width="40" height="38" viewBox="0 0 40 38">
  <defs><linearGradient id="cl" x1="0" y1="0" x2="0" y2="1"><stop offset="0" stop-color="#a9cdf6"/><stop offset="1" stop-color="#6aa6ea"/></linearGradient></defs>
  <circle cx="24" cy="16" r="7" fill="#f39a1e"/>
  <path d="M9 35.5a6 6 0 0 1-1-11.9A9 9 0 0 1 25 20.5a7.5 7.5 0 0 1 7.5 7.5c0 4.2-3 7.5-7 7.5z" fill="url(#cl)"/>
  <circle cx="27" cy="10" r="9.5" fill="#d0281f"/>
  <text x="27" y="14.5" font-size="13" font-family="Liberation Sans" fill="#fff" text-anchor="middle">2</text>
 </svg>
 <svg class="a" style="left:350px;top:16px" width="29" height="29" viewBox="0 0 29 29">
  <defs><linearGradient id="wl" x1="0" y1="0" x2="1" y2="1"><stop offset="0" stop-color="#3cc3f7"/><stop offset="1" stop-color="#0a78d4"/></linearGradient></defs>
  <rect x="0" y="0" width="13.8" height="13.8" rx="1.5" fill="url(#wl)"/><rect x="15.2" y="0" width="13.8" height="13.8" rx="1.5" fill="url(#wl)"/><rect x="0" y="15.2" width="13.8" height="13.8" rx="1.5" fill="url(#wl)"/><rect x="15.2" y="15.2" width="13.8" height="13.8" rx="1.5" fill="url(#wl)"/>
 </svg>
 <svg class="a" style="left:407px;top:16px" width="28" height="28" viewBox="0 0 28 28" fill="none" stroke="#1c1c1c" stroke-width="2.6" stroke-linecap="round"><circle cx="11.5" cy="11.5" r="9.5"/><path d="M18.5 18.5l7.5 7.5"/></svg>
 <svg class="a" style="left:460.5px;top:15.5px" width="31" height="29" viewBox="0 0 31 29"><rect x="8" y="0.5" width="22" height="21.5" rx="2" fill="#f2f2f2" stroke="#e0e0e0" stroke-width="0.6"/><rect x="0.5" y="8" width="22" height="20.5" rx="2" fill="#2b2b2b"/><rect x="8" y="8" width="14.5" height="14" fill="#c4c4c4"/></svg>
 <svg class="a" style="left:510px;top:10px" width="40" height="40" viewBox="0 0 40 40">
  <defs><linearGradient id="cp1" x1="0" y1="0" x2="0" y2="1"><stop offset="0" stop-color="#1ea5f5"/><stop offset="0.55" stop-color="#3aa07a"/><stop offset="1" stop-color="#f2c40c"/></linearGradient><linearGradient id="cp2" x1="0" y1="0" x2="0" y2="1"><stop offset="0" stop-color="#a24ee6"/><stop offset="0.5" stop-color="#f0558a"/><stop offset="1" stop-color="#fb8c4a"/></linearGradient></defs>
  <path d="M11 6h13.5c1.8 0 3 .8 3.6 2.5l1.6 5H21.5c-1.6 0-2.6.8-3 2.3l-2.3 8.4c-.4 1.5-1.3 2.3-2.8 2.3H9c-2 0-3-1.3-2.6-3.2l2.5-14.6C9.2 7 10 6 11 6z" fill="url(#cp1)"/>
  <path d="M23 6h1.5c1.8 0 3 .8 3.6 2.5l1.6 5H21z" fill="#1f5fd8" opacity="0.8"/>
  <path d="M24 13.7h9.5c2 0 3 1.3 2.6 3.2L33 30.5c-.4 1.6-1.2 2.5-3 2.5H16c-1.8 0-3-.8-3.6-2.5l-1-4.5h7.8c1.6 0 2.6-.8 3-2.3l2.3-8.4c.3-1 .6-1.6 1.5-1.6z" fill="url(#cp2)"/>
  <path d="M12.4 26h7l-1.5 5.5c-.5 1.2-1.2 1.5-2 1.5h0c-1.8 0-3-.8-3.6-2.5z" fill="#f4553a" opacity="0.85"/>
 </svg>
 <svg class="a" style="left:570.5px;top:16px" width="31" height="28" viewBox="0 0 31 28"><path d="M0.5 2.5a2 2 0 0 1 2-2h8l3 3h15a2 2 0 0 1 2 2V8H0.5z" fill="#e2a816"/><rect x="0.5" y="5" width="30" height="22.5" rx="2" fill="#fcd04f"/><rect x="6" y="18.5" width="19" height="9" rx="3" fill="#1a77c9"/><rect x="10" y="20.5" width="11" height="1.6" fill="#0d4f8c"/></svg>
 <svg class="a" style="left:620px;top:10px" width="45" height="45" viewBox="620 850 45 45">
  <defs><linearGradient id="ed1" x1="0" y1="1" x2="1" y2="0.2"><stop offset="0" stop-color="#1a78d8"/><stop offset="0.5" stop-color="#2ebfe0"/><stop offset="1" stop-color="#5ee46a"/></linearGradient><linearGradient id="ed2" x1="0" y1="0" x2="1" y2="1"><stop offset="0" stop-color="#1f86e0"/><stop offset="1" stop-color="#1746a8"/></linearGradient></defs>
  <path d="M641 855c8.5 0 15 6 15 12.5c0 4-3 7.5-7.5 7.5c-3 0-5-1.5-5-4.5c0-2-1.5-3.5-3.5-3.5c-3 0-4.5 3-3.5 6c1.5 5 6.5 7.5 12 6.5c2-.3 3.5-1 4.5-1.7c-2.5 4.5-7.5 7.2-12.5 7.2c-8.5 0-15-6.5-15-15s6.5-15 15.5-15z" fill="url(#ed1)"/>
  <path d="M626.5 868c1-5 6-8 11-7.5c3 .3 5 1.8 5.5 3.8c-1-.6-2-.8-3-.8c-3 0-4.5 3-3.5 6c1.5 5 6.5 7.5 12 6.5c2-.3 3.5-1 4.5-1.7c-2.5 4.5-7.5 7.2-12.5 7.2c-8.5 0-15-6-14-13.5z" fill="url(#ed2)"/>
 </svg>
 <div class="a" style="left:637.5px;top:49.5px;width:8px;height:4.5px;background:#8a8680;border-radius:3px"></div>
 <svg class="a" style="left:680.5px;top:15.5px" width="30" height="30" viewBox="0 0 30 30"><path d="M9 5V3.5a2 2 0 0 1 2-2h8a2 2 0 0 1 2 2V5" fill="none" stroke="#55b7f0" stroke-width="1.8"/><rect x="0.5" y="4.5" width="29" height="25" rx="3" fill="#1d4f91"/><rect x="8" y="11" width="6.3" height="6.3" fill="#f25022"/><rect x="15.7" y="11" width="6.3" height="6.3" fill="#7fba00"/><rect x="8" y="18.7" width="6.3" height="6.3" fill="#00a4ef"/><rect x="15.7" y="18.7" width="6.3" height="6.3" fill="#ffb900"/></svg>
 <svg class="a" style="left:735.5px;top:14.799999999999955px" width="31" height="30.5" viewBox="0 0 31 30.5"><rect width="31" height="30.5" rx="1.5" fill="#1a9ad7"/><text x="3" y="19" font-size="9" font-family="Liberation Sans" font-style="italic" fill="#fff">my</text><text x="15" y="20.5" font-size="13" font-family="Liberation Serif" font-style="italic" font-weight="700" fill="#fff">hp</text></svg>
 <svg class="a" style="left:790.5px;top:8px" width="38" height="37" viewBox="0 0 38 37"><circle cx="15" cy="22" r="14" fill="#fff"/><circle cx="15" cy="22" r="12.5" fill="#1f8bd3"/><text x="15" y="29" font-size="20" font-weight="700" font-family="Liberation Sans" fill="#fff" text-anchor="middle">?</text><circle cx="27" cy="10.5" r="10" fill="#fcc21d"/></svg>
 <svg class="a" style="left:845.5px;top:16.5px" width="30" height="27" viewBox="0 0 30 27"><rect x="7" y="0" width="23" height="27" rx="2" fill="#21a366"/><rect x="7" y="9" width="23" height="9" fill="#107c41"/><rect x="18.5" y="0" width="11.5" height="9" fill="#33c481" rx="1"/><rect x="18.5" y="18" width="11.5" height="9" fill="#185c37"/><rect x="7" y="18" width="11.5" height="9" fill="#185c37"/><rect x="0" y="6" width="15" height="15" rx="1.5" fill="#107c41"/><path d="M4 9.5l7 8M11 9.5l-7 8" stroke="#fff" stroke-width="1.9"/></svg>
 <svg class="a" style="left:901px;top:16px" width="30" height="28" viewBox="0 0 30 28"><circle cx="16.5" cy="14" r="13.5" fill="#ed6c47"/><path d="M16.5 .5a13.5 13.5 0 0 1 13.5 13.5H16.5z" fill="#ff8f6b"/><path d="M30 14a13.5 13.5 0 0 1-13.5 13.5V14z" fill="#d35230"/><rect x="0" y="6.5" width="15" height="15" rx="1.5" fill="#c43e1c"/><text x="7.5" y="18.5" font-size="12" font-weight="700" font-family="Liberation Sans" fill="#fff" text-anchor="middle">P</text></svg>
 <svg class="a" style="left:956px;top:14.5px" width="30" height="29" viewBox="0 0 30 29">
  <defs><radialGradient id="ff1" cx="0.6" cy="0.2" r="0.9"><stop offset="0" stop-color="#fff44f"/><stop offset="0.45" stop-color="#ff9a1f"/><stop offset="0.8" stop-color="#ff4b4b"/><stop offset="1" stop-color="#e31587"/></radialGradient></defs>
  <path d="M15 28.5C7 28.5 1 22.5 1 15c0-3.5 1.2-6.5 3-9c.5 2 1.5 3 3 3.5C8.5 5 12 2.5 16 2c-1 1.5-.8 3 0 4c1.5-3 4.5-5 7.5-5.5c-.8 1.5-.5 3 .5 4.5C27 7.5 29 11 29 15c0 7.5-6 13.5-14 13.5z" fill="url(#ff1)"/>
  <circle cx="15" cy="16" r="6.5" fill="#7b4fd8"/>
  <path d="M6 12c2-3 6-4.5 9-3.5c-3 1-4.5 3-4.5 5z" fill="#ff7c2a"/>
 </svg>
 <div class="a" style="left:967.5px;top:50px;width:8px;height:4px;background:#8a8680;border-radius:3px"></div>
 <svg class="a" style="left:1010.5px;top:16.5px" width="30" height="27" viewBox="0 0 30 27"><rect x="7" y="0" width="23" height="27" rx="2" fill="#41a5ee"/><rect x="7" y="7" width="23" height="7" fill="#2b7cd3"/><rect x="7" y="14" width="23" height="7" fill="#185abd"/><rect x="7" y="21" width="23" height="6" rx="1" fill="#103f91"/><rect x="0" y="6" width="15" height="15" rx="1.5" fill="#185abd"/><text x="7.5" y="18" font-size="11" font-weight="700" font-family="Liberation Sans" fill="#fff" text-anchor="middle">W</text></svg>
 <div class="a" style="left:1056.5px;top:6.7999999999999545px;width:47.5px;height:47px;background:rgba(255,255,255,0.45);border-radius:5px;box-shadow:0 0 0 0.5px rgba(0,0,0,0.06)"></div>
 <svg class="a" style="left:1065.5px;top:16.5px" width="31" height="27" viewBox="0 0 31 27">
  <circle cx="16.5" cy="4.5" r="4.2" fill="#7b83eb"/><circle cx="25.5" cy="5.5" r="3" fill="#5059c9"/>
  <path d="M21 10h8.5a1.5 1.5 0 0 1 1.5 1.5v6.5a5.5 5.5 0 0 1-5.5 5.5H21z" fill="#5059c9"/>
  <path d="M10 10h12.5v10a6.5 6.5 0 0 1-13 0z" fill="#7b83eb"/>
  <rect x="0" y="6" width="15" height="15" rx="1.5" fill="#4b53bc"/>
  <path d="M3.5 9.5h8v2.2H8.7V18H6.3v-6.3H3.5z" fill="#fff"/>
 </svg>
 <div class="a" style="left:1070.5px;top:50px;width:20px;height:3.7px;background:#0f6cbd;border-radius:2px"></div>

 <svg class="a" style="left:1194px;top:25px" width="15" height="9" viewBox="0 0 15 9" fill="none" stroke="#1c1c1c" stroke-width="1.5"><path d="M1 8l6.5-6.5L14 8"/></svg>
 <svg class="a" style="left:1229.5px;top:19.5px" width="24" height="22" viewBox="0 0 24 22" fill="none" stroke="#1c1c1c" stroke-width="1.4"><path d="M3 8a9 9 0 0 1 16-3M19.5 1.5v4h-4M21 14a9 9 0 0 1-16 3M4.5 20.5v-4h4"/><circle cx="16" cy="15.5" r="4.5" fill="#0f6cbd" stroke="none"/></svg>
 <svg class="a" style="left:1270px;top:21.5px" width="23" height="18" viewBox="0 0 23 18" fill="none" stroke="#1c1c1c" stroke-width="1.4"><path d="M6 15.5a4.5 4.5 0 0 1-.5-9A6.5 6.5 0 0 1 17.5 7a4.3 4.3 0 0 1 0 8.5z" fill="#bdbdbd" fill-opacity="0.6"/><path d="M2 1.5l18 15"/></svg>
 <svg class="a" style="left:1312px;top:19.5px" width="18" height="21" viewBox="0 0 18 21" fill="none" stroke="#0f6cbd" stroke-width="1.6" stroke-linecap="round"><rect x="5.5" y="1" width="7" height="12" rx="3.5"/><path d="M1.5 10a7.5 7.5 0 0 0 15 0M9 17.5V20"/></svg>
 <div class="t" style="left:1356.5px;top:14.7px;font-size:13.3px;color:#1c1c1c;letter-spacing:0.3px">ESP</div>
 <div class="t" style="left:1355.8px;top:33.3px;font-size:13.3px;color:#1c1c1c;letter-spacing:0.5px">LAA</div>
 <svg class="a" style="left:1405px;top:22px" width="22" height="16" viewBox="0 0 22 16" fill="none" stroke="#1c1c1c" stroke-width="1.5" stroke-linecap="round"><path d="M1.5 5.5a13.5 13.5 0 0 1 19 0M4.5 8.5a9.3 9.3 0 0 1 13 0M7.5 11.5a5 5 0 0 1 7 0"/><circle cx="11" cy="14.3" r="1.3" fill="#1c1c1c" stroke="none"/></svg>
 <svg class="a" style="left:1435.5px;top:21px" width="22" height="18" viewBox="0 0 22 18" fill="none" stroke="#1c1c1c" stroke-width="1.4" stroke-linejoin="round"><path d="M1 6h3.5L9.5 1.5v15L4.5 12H1z"/><path d="M13 6a4 4 0 0 1 0 6M15.5 3.5a7.5 7.5 0 0 1 0 11M18 1.5a11 11 0 0 1 0 15" stroke-linecap="round"/></svg>
 <svg class="a" style="left:1465px;top:20px" width="22" height="18" viewBox="0 0 22 18"><rect x="1" y="5.5" width="17" height="11" rx="2" fill="none" stroke="#1c1c1c" stroke-width="1.4"/><rect x="18.5" y="9" width="2.5" height="4" rx="1" fill="#1c1c1c"/><rect x="3" y="7.5" width="13" height="7" fill="#1c1c1c"/><path d="M7 0.5L3.5 7h3.5L5 12.5" fill="none" stroke="#1c1c1c" stroke-width="1.4"/></svg>
 <div class="t" style="right:24.5px;top:13.3px;font-size:14.2px;color:#1c1c1c;text-align:right">10:38</div>
 <div class="t" style="right:24.5px;top:32.7px;font-size:14.2px;color:#1c1c1c;text-align:right;letter-spacing:0.8px">17/7/2025</div>
</div>
<div class="a" style="left:0;top:159px;width:1600px;height:1px;background:#d9d9d9"></div><div class="a" style="left:0;top:160px;width:1600px;height:1px;background:#e9e9e9"></div>
<div class="a" style="left:1200px;top:159px;width:0;height:0"> <!-- tooltip -->
 <div class="a" style="left:-2px;top:6px;width:246px;height:34px;background:#fff;border-radius:6px;box-shadow:0 0 2px rgba(0,0,0,0.12),0 2px 6px rgba(0,0,0,0.10)"></div>
 <div class="a" style="left:22px;top:1.5px;width:10px;height:10px;background:#fff;transform:rotate(45deg);box-shadow:-1px -1px 1px rgba(0,0,0,0.06)"></div>
 <div class="a" style="left:10px;top:7px;width:60px;height:12px;background:#fff"></div>
 <div class="t" style="left:12.0px;top:15.0px;font-size:14.75px;color:#383838">Desactivar cámara (Ctrl+Shift+O)</div></div>

</body></html>
